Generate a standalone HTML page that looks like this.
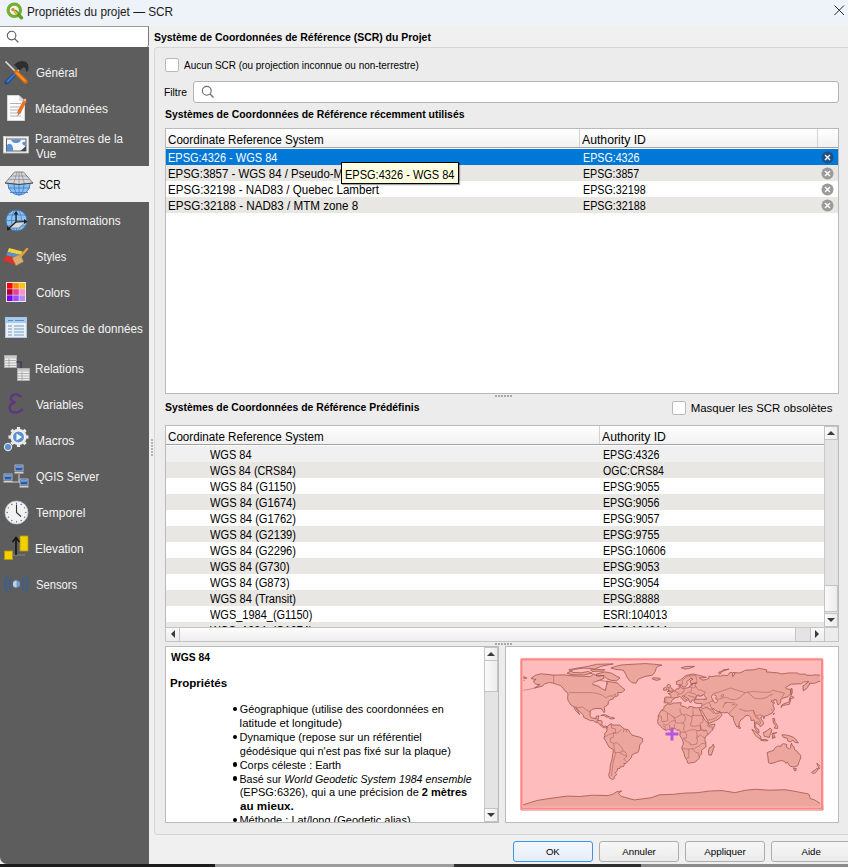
<!DOCTYPE html><html><head><meta charset="utf-8"><style>
*{margin:0;padding:0;box-sizing:border-box}
html,body{width:848px;height:867px;overflow:hidden;background:#f0f0f0;font-family:"Liberation Sans",sans-serif;position:relative}
.a{position:absolute}
.t{position:absolute;white-space:nowrap;line-height:1;color:#000}
.sbtn{position:absolute;background:linear-gradient(90deg,#fafafa,#ececec);border:1px solid #c4c4c4}
.btn{position:absolute;height:21px;border:1px solid #adadad;border-radius:3px;background:linear-gradient(#f7f7f7,#ebebeb)}
</style></head><body>
<div class="a" style="left:0;top:0;width:848px;height:26px;background:#eef2f9"></div>
<svg class="a" style="left:6px;top:2px" width="18" height="18" viewBox="0 0 18 18">
<circle cx="8.3" cy="8.3" r="6.2" fill="none" stroke="#73b02f" stroke-width="3.2"/>
<path d="M9.5 9.5 L15.5 15.8" stroke="#5e9d24" stroke-width="3.4" stroke-linecap="round"/>
<circle cx="7" cy="7.6" r="1.7" fill="#ef7b2a"/><path d="M8.3 9 L11.3 12.2" stroke="#f3c33c" stroke-width="1.8"/>
</svg>
<div class="t" style="left:27.36px;top:5.57px;font-size:12.2px;transform:scaleX(0.9672);transform-origin:0 0;color:#1b1b1b">Propriétés du projet — SCR</div>
<svg class="a" style="left:834px;top:5px" width="10.5" height="10.5" viewBox="0 0 12 12"><path d="M0.6 0.6L11.4 11.4M11.4 0.6L0.6 11.4" stroke="#1e1e1e" stroke-width="1.1"/></svg>
<div class="a" style="left:0;top:47px;width:149px;height:817px;background:#5d5d5d;border-bottom-left-radius:7px"></div>
<div class="a" style="left:0;top:26px;width:149px;height:21px;background:#fff;border-top:1px solid #999;border-right:1px solid #7a7a7a;border-bottom-right-radius:3px"></div>
<svg class="a" style="left:6px;top:30px" width="14" height="14" viewBox="0 0 14 14"><circle cx="5.6" cy="5.6" r="4.3" fill="none" stroke="#5a5a5a" stroke-width="1.1"/><path d="M8.6 8.6L12.4 12.4" stroke="#5a5a5a" stroke-width="1.3"/></svg>
<div class="a" style="left:0;top:166px;width:149px;height:36px;background:#f0f0f0"></div>
<div class="t" style="left:35.82px;top:67.19px;font-size:12.3px;transform:scaleX(0.9439);transform-origin:0 0;color:#f4f4f4">Général</div>
<div class="t" style="left:35.44px;top:103.19px;font-size:12.3px;transform:scaleX(0.9797);transform-origin:0 0;color:#f4f4f4">Métadonnées</div>
<div class="t" style="left:35.48px;top:132.89px;font-size:12.3px;transform:scaleX(0.9383);transform-origin:0 0;color:#f4f4f4">Paramètres de la</div>
<div class="t" style="left:36.40px;top:148.49px;font-size:12.3px;transform:scaleX(0.9436);transform-origin:0 0;color:#f4f4f4">Vue</div>
<div class="t" style="left:38.89px;top:178.99px;font-size:12.3px;transform:scaleX(0.8334);transform-origin:0 0;color:#000">SCR</div>
<div class="t" style="left:36.16px;top:214.89px;font-size:12.3px;transform:scaleX(0.9568);transform-origin:0 0;color:#f4f4f4">Transformations</div>
<div class="t" style="left:35.96px;top:250.99px;font-size:12.3px;transform:scaleX(0.9040);transform-origin:0 0;color:#f4f4f4">Styles</div>
<div class="t" style="left:35.81px;top:286.99px;font-size:12.3px;transform:scaleX(0.9549);transform-origin:0 0;color:#f4f4f4">Colors</div>
<div class="t" style="left:35.93px;top:322.99px;font-size:12.3px;transform:scaleX(0.9467);transform-origin:0 0;color:#f4f4f4">Sources de données</div>
<div class="t" style="left:35.46px;top:363.09px;font-size:12.3px;transform:scaleX(0.9534);transform-origin:0 0;color:#f4f4f4">Relations</div>
<div class="t" style="left:36.40px;top:399.09px;font-size:12.3px;transform:scaleX(0.9401);transform-origin:0 0;color:#f4f4f4">Variables</div>
<div class="t" style="left:35.44px;top:435.39px;font-size:12.3px;transform:scaleX(0.9751);transform-origin:0 0;color:#f4f4f4">Macros</div>
<div class="t" style="left:35.96px;top:471.09px;font-size:12.3px;transform:scaleX(0.8975);transform-origin:0 0;color:#f4f4f4">QGIS Server</div>
<div class="t" style="left:36.16px;top:507.09px;font-size:12.3px;transform:scaleX(0.9783);transform-origin:0 0;color:#f4f4f4">Temporel</div>
<div class="t" style="left:35.45px;top:543.09px;font-size:12.3px;transform:scaleX(0.9607);transform-origin:0 0;color:#f4f4f4">Elevation</div>
<div class="t" style="left:35.95px;top:579.19px;font-size:12.3px;transform:scaleX(0.9128);transform-origin:0 0;color:#f4f4f4">Sensors</div>
<svg class="a" style="left:4px;top:60px" width="25" height="25" viewBox="0 0 25 25">
<path d="M2.5 22.5 L12 13" stroke="#1f4f8f" stroke-width="4.2" stroke-linecap="round"/>
<path d="M3 22 L11 14" stroke="#3f78c0" stroke-width="2"/>
<path d="M12 13 L16 9" stroke="#bdbdbd" stroke-width="2"/>
<path d="M10 4.5 Q16 -1 22 2 Q25 4 24.5 8.5 Q24 11.5 22.5 12 L21.5 8.5 Q20 6.5 18.5 8 L16 11 L13 8 Z" fill="#2b2f33"/>
<path d="M1.5 1.5 L12 12" stroke="#e0e0e0" stroke-width="1.6"/>
<path d="M12 12 L21.5 21.5" stroke="#e36c0a" stroke-width="4.4" stroke-linecap="round"/>
<path d="M12.5 12.5 L21 21" stroke="#ff9a2e" stroke-width="1.6"/>
</svg>
<svg class="a" style="left:7px;top:95px" width="20" height="26" viewBox="0 0 20 26">
<path d="M0.5 0.5 H12 L17.5 6 V25.5 H0.5 Z" fill="#fdfdfd" stroke="#d8d8d8" stroke-width="1"/>
<path d="M12 0.5 V6 H17.5" fill="#dedede"/>
<g stroke="#b4b4b4" stroke-width="1"><path d="M3 8.5H14M3 12H14M3 15H13M3 18H12M3 21H14"/></g>
<path d="M11.5 18.5 L18 5.5" stroke="#e8742a" stroke-width="3.6"/>
<path d="M17 4.5 L19 5.5" stroke="#f1b9a0" stroke-width="2.5"/>
<path d="M10.2 21.5 L11.3 18 L12.6 18.7 Z" fill="#777"/>
</svg>
<svg class="a" style="left:3px;top:136px" width="26" height="18" viewBox="0 0 26 18">
<rect x="0.5" y="0.5" width="25" height="16.5" fill="#f2f2f2" stroke="#c8c8c8" stroke-width="0.8"/>
<rect x="0.5" y="0" width="3" height="17" rx="1.5" fill="#f6f6f6" stroke="#bcbcbc" stroke-width="0.7"/>
<rect x="3.5" y="3" width="19.5" height="12" fill="#f6f6f6" stroke="#555" stroke-width="0.9"/>
<path d="M8 3.5 H18 Q17.5 6.5 14 7 Q11 7.5 9 5.5 Z" fill="#5b90d4"/>
<path d="M4 15 V9 Q7 6 9.5 10 Q10.5 13 10 15 Z" fill="#5b90d4"/>
<path d="M19 7 Q21 5 22.8 6 V10 Q20.5 10.5 19 7Z" fill="#5b90d4"/>
<path d="M17.5 15 L23 10 V15 Z" fill="#444"/>
</svg>
<svg class="a" style="left:5px;top:171px" width="29" height="25" viewBox="0 0 29 25">
<circle cx="14" cy="13" r="11" fill="#8cc0f0" stroke="#3a78c8" stroke-width="0.9"/>
<g stroke="#3a78c8" stroke-width="0.8" fill="none"><path d="M3 17 H25M5 21.5 H23M14 13 V24"/><ellipse cx="14" cy="13" rx="5" ry="11"/></g>
<path d="M9.5 1 H18.5 L28 12 Q14 15 0 12 Z" fill="#d2d6dc" stroke="#6c6c6c" stroke-width="0.8"/>
<g stroke="#7d7d7d" stroke-width="0.6" fill="none"><path d="M12 1 L8.5 13M14 1 V13.8M16 1 L19.5 13M6 5 H22M3 8.5 H25"/></g>
<path d="M0 12 Q14 15 28 12" stroke="#444" stroke-width="0.9" fill="none"/>
</svg>
<svg class="a" style="left:5px;top:209px" width="23" height="23" viewBox="0 0 23 23">
<circle cx="11.5" cy="11.5" r="10.5" fill="#8ec2f0" stroke="#3a78c0" stroke-width="0.9"/>
<g stroke="#3a78c0" stroke-width="0.7" fill="none"><path d="M1 11.5 H22M2.5 6 H20.5M2.5 17 H20.5M11.5 1 V22"/><ellipse cx="11.5" cy="11.5" rx="5" ry="10.5"/></g>
<path d="M4 19 L11 13 L21 12.5 L14 19 Z" fill="#d8d8d8" stroke="#666" stroke-width="0.6"/>
<path d="M11 13 V3" stroke="#222" stroke-width="1.3"/><path d="M8.5 5.5 L11 2 L13.5 5.5Z" fill="#222"/>
<path d="M11 13 L20.5 12.5" stroke="#222" stroke-width="1.2"/><path d="M19 10 L22.5 12.5 L19 15Z" fill="#222"/>
<path d="M11 13 L3.5 19.5" stroke="#222" stroke-width="1.2"/><path d="M2 17 L2 21.5 L6 20.5Z" fill="#222"/>
</svg>
<svg class="a" style="left:3px;top:247px" width="26" height="20" viewBox="0 0 26 20">
<path d="M6 1 L19.5 4.5 L18 8 L4.5 5 Z" fill="#f2d040"/>
<path d="M4.5 5 L18 8 L16.5 11.5 L3 8.5 Z" fill="#5a90cc"/>
<path d="M3 8.5 L16.5 11.5 L14.5 18.5 L0 13.5 Z" fill="#e0302a"/>
<path d="M9.5 11 L17 7.5 L20.5 14.5 L13 18.5 Z" fill="#ddb47c" stroke="#b8864a" stroke-width="0.7"/>
<g stroke="#c79a60" stroke-width="0.5"><path d="M11.5 10L15 17.5M14 9L17.5 16.5M10.5 13L18.5 9.5M11.5 15.5L19.5 12"/></g>
<path d="M17.5 9.5 L24 2" stroke="#e0a040" stroke-width="2.4" stroke-linecap="round"/>
</svg>
<svg class="a" style="left:6px;top:282px" width="20" height="20" viewBox="0 0 20 20"><rect x="0" y="0" width="20" height="20" fill="#e8e8e8"/><rect x="1.0" y="1.0" width="5.6" height="5.6" fill="#ff0000"/><rect x="7.2" y="1.0" width="5.6" height="5.6" fill="#ff8c00"/><rect x="13.4" y="1.0" width="5.6" height="5.6" fill="#ffc400"/><rect x="1.0" y="7.2" width="5.6" height="5.6" fill="#b0003a"/><rect x="7.2" y="7.2" width="5.6" height="5.6" fill="#e7409a"/><rect x="13.4" y="7.2" width="5.6" height="5.6" fill="#ff8fc9"/><rect x="1.0" y="13.4" width="5.6" height="5.6" fill="#7a00ff"/><rect x="7.2" y="13.4" width="5.6" height="5.6" fill="#9d4dff"/><rect x="13.4" y="13.4" width="5.6" height="5.6" fill="#b38cff"/></svg>
<svg class="a" style="left:5px;top:317px" width="22" height="21" viewBox="0 0 22 21">
<rect x="0.5" y="0.5" width="21" height="20" fill="#edf0f3" stroke="#aac8e4" stroke-width="1"/>
<rect x="1" y="1" width="20" height="5" fill="#a8ccec"/>
<g stroke="#5b8ec6" stroke-width="1.2"><path d="M3 3.5H8M10 3.5H19"/></g>
<g stroke="#6a9ad0" stroke-width="1"><path d="M3 9H7M9 9H19M3 12H7M9 12H19M3 15H7M9 15H19M3 18H7M9 18H19"/></g>
</svg>
<svg class="a" style="left:4px;top:355px" width="26" height="26" viewBox="0 0 26 26">
<rect x="0.5" y="0.5" width="12" height="12" fill="#ededed" stroke="#b0b0b0" stroke-width="0.8"/>
<rect x="1" y="1" width="11" height="2.5" fill="#c8c8c8"/>
<g stroke="#9a9a9a" stroke-width="0.7"><path d="M1 5.5H12M1 8H12M1 10.5H12M5 3.5V12"/></g>
<path d="M12.5 7 H17 V14" stroke="#2a3a55" stroke-width="1.2" fill="none"/>
<rect x="13.5" y="13.5" width="12" height="12" fill="#ededed" stroke="#b0b0b0" stroke-width="0.8"/>
<rect x="14" y="14" width="11" height="2.5" fill="#c8c8c8"/>
<g stroke="#9a9a9a" stroke-width="0.7"><path d="M14 18.5H25M14 21H25M14 23.5H25M18 16.5V25"/></g>
</svg>
<svg class="a" style="left:8px;top:393px" width="16" height="21" viewBox="0 0 16 21">
<path d="M12.5 3.5 Q10 1 6.5 1.5 Q2.5 2.5 3 6 Q3.5 9 7.5 9.5 Q2 10.5 1.5 14.5 Q1.5 19.5 7.5 19.5 Q11.5 19.5 14 16.5" stroke="#5f3680" stroke-width="2.4" fill="none" stroke-linecap="round"/>
</svg>
<svg class="a" style="left:3px;top:427px" width="26" height="26" viewBox="0 0 26 26">
<g transform="translate(15.5,10)">
<circle r="8.2" fill="#e8e8e8"/>
<g fill="#e8e8e8"><rect x="-1.6" y="-10" width="3.2" height="4" transform="rotate(0)"/><rect x="-1.6" y="-10" width="3.2" height="4" transform="rotate(45)"/><rect x="-1.6" y="-10" width="3.2" height="4" transform="rotate(90)"/><rect x="-1.6" y="-10" width="3.2" height="4" transform="rotate(135)"/><rect x="-1.6" y="-10" width="3.2" height="4" transform="rotate(180)"/><rect x="-1.6" y="-10" width="3.2" height="4" transform="rotate(225)"/><rect x="-1.6" y="-10" width="3.2" height="4" transform="rotate(270)"/><rect x="-1.6" y="-10" width="3.2" height="4" transform="rotate(315)"/></g>
<circle r="6" fill="#5b8fd0" stroke="#fff" stroke-width="1"/>
<path d="M-2 -3.5 L3.5 0 L-2 3.5Z" fill="#fff"/>
</g>
<g transform="translate(5,20)"><circle r="4.2" fill="#dedede"/><circle r="3" fill="#5b8fd0"/></g>
</svg>
<svg class="a" style="left:3px;top:464px" width="27" height="25" viewBox="0 0 27 25"><path d="M9 18 H17 M16 10 V18" stroke="#d0d0d0" stroke-width="1" fill="none"/><rect x="12" y="1" width="8" height="6" fill="#2c5aa0" stroke="#ccc" stroke-width="0.8"/><rect x="12.8" y="1.8" width="6.4" height="2" fill="#6fa0e0"/><rect x="11.5" y="8" width="9" height="1.5" fill="#d0d0d0"/><rect x="1" y="10" width="8" height="6" fill="#2c5aa0" stroke="#ccc" stroke-width="0.8"/><rect x="1.8" y="10.8" width="6.4" height="2" fill="#6fa0e0"/><rect x="0.5" y="17" width="9" height="1.5" fill="#d0d0d0"/><rect x="17" y="15" width="8" height="6" fill="#2c5aa0" stroke="#ccc" stroke-width="0.8"/><rect x="17.8" y="15.8" width="6.4" height="2" fill="#6fa0e0"/><rect x="16.5" y="22" width="9" height="1.5" fill="#d0d0d0"/></svg>
<svg class="a" style="left:4px;top:500px" width="25" height="25" viewBox="0 0 25 25">
<circle cx="12.5" cy="12.5" r="11.5" fill="#f2f2f2" stroke="#c0c0c0" stroke-width="0.8"/>
<circle cx="21.80" cy="12.50" r="0.7" fill="#3b6fb8"/><circle cx="20.55" cy="17.15" r="0.7" fill="#3b6fb8"/><circle cx="17.15" cy="20.55" r="0.7" fill="#3b6fb8"/><circle cx="12.50" cy="21.80" r="0.7" fill="#3b6fb8"/><circle cx="7.85" cy="20.55" r="0.7" fill="#3b6fb8"/><circle cx="4.45" cy="17.15" r="0.7" fill="#3b6fb8"/><circle cx="3.20" cy="12.50" r="0.7" fill="#3b6fb8"/><circle cx="4.45" cy="7.85" r="0.7" fill="#3b6fb8"/><circle cx="7.85" cy="4.45" r="0.7" fill="#3b6fb8"/><circle cx="12.50" cy="3.20" r="0.7" fill="#3b6fb8"/><circle cx="17.15" cy="4.45" r="0.7" fill="#3b6fb8"/><circle cx="20.55" cy="7.85" r="0.7" fill="#3b6fb8"/>
<path d="M12.5 4.5 V12.5 L17 16.5" stroke="#333" stroke-width="1.1" fill="none"/>
</svg>
<svg class="a" style="left:4px;top:535px" width="25" height="26" viewBox="0 0 25 26">
<rect x="16" y="1" width="8" height="15" fill="#f0d000" stroke="#b49a00" stroke-width="0.8"/>
<rect x="0.5" y="16" width="8" height="8.5" fill="#f0d000" stroke="#b49a00" stroke-width="0.8"/>
<path d="M8 20 H21" stroke="#888" stroke-width="1"/>
<path d="M12 20 V4" stroke="#151515" stroke-width="1.6"/><path d="M8.5 7 L12 2.5 L15.5 7" stroke="#151515" stroke-width="1.6" fill="none"/>
</svg>
<svg class="a" style="left:3px;top:574px" width="27" height="20" viewBox="0 0 27 20">
<circle cx="13.5" cy="10" r="3.6" fill="#6f9cd2"/><path d="M13.5 6.4 A3.6 3.6 0 0 0 13.5 13.6Z" fill="#b8d0ee"/>
<g stroke="#3c5f8c" stroke-width="1.9" fill="none"><path d="M8 4 Q4.5 10 8 16M19 4 Q22.5 10 19 16M4.5 1.5 Q-0.5 10 4.5 18.5M22.5 1.5 Q27.5 10 22.5 18.5"/></g>
</svg>
<div class="a" style="left:149px;top:26px;width:699px;height:838px;background:#f0f0f0"></div>
<div class="t" style="left:154.29px;top:32.58px;font-size:10.3px;transform:scaleX(1.0144);transform-origin:0 0;font-weight:bold">Système de Coordonnées de Référence (SCR) du Projet</div>
<div class="a" style="left:154px;top:47px;width:710px;height:788px;border:1px solid #d6d6d6;border-radius:3px;background:#ececec"></div>
<div class="a" style="left:165px;top:58px;width:14px;height:14px;background:#fff;border:1px solid #b8b8b8;border-radius:2px"></div>
<div class="t" style="left:184.20px;top:60.88px;font-size:10.3px;transform:scaleX(0.9655);transform-origin:0 0">Aucun SCR (ou projection inconnue ou non-terrestre)</div>
<div class="t" style="left:164.38px;top:87.73px;font-size:10.0px;transform:scaleX(1.0304);transform-origin:0 0">Filtre</div>
<div class="a" style="left:193px;top:81px;width:646px;height:22px;background:#fff;border:1px solid #b4b4b4;border-radius:3px"></div>
<svg class="a" style="left:201px;top:85px" width="14" height="14" viewBox="0 0 14 14"><circle cx="5.8" cy="5.8" r="4.4" fill="none" stroke="#6a6a6a" stroke-width="1.1"/><path d="M8.8 8.8L12.5 12.5" stroke="#6a6a6a" stroke-width="1.3"/></svg>
<div class="t" style="left:164.79px;top:110.38px;font-size:10.3px;transform:scaleX(1.0123);transform-origin:0 0;font-weight:bold">Systèmes de Coordonnées de Référence récemment utilisés</div>
<div class="a" style="left:151px;top:439px;width:1.5px;height:1.5px;background:#b4b4b4"></div>
<div class="a" style="left:151px;top:442px;width:1.5px;height:1.5px;background:#b4b4b4"></div>
<div class="a" style="left:151px;top:445px;width:1.5px;height:1.5px;background:#b4b4b4"></div>
<div class="a" style="left:151px;top:448px;width:1.5px;height:1.5px;background:#b4b4b4"></div>
<div class="a" style="left:151px;top:451px;width:1.5px;height:1.5px;background:#b4b4b4"></div>
<div class="a" style="left:151px;top:454px;width:1.5px;height:1.5px;background:#b4b4b4"></div>
<div class="a" style="left:165px;top:128px;width:674px;height:266px;background:#fff;border:1px solid #b9b9b9"></div>
<div class="a" style="left:166px;top:129px;width:672px;height:18px;background:linear-gradient(#ffffff,#f1f1f1)"></div>
<div class="a" style="left:166px;top:147px;width:672px;height:1px;background:#a3a3a3"></div>
<div class="a" style="left:579px;top:129px;width:1px;height:18px;background:#d3d3d3"></div>
<div class="a" style="left:817px;top:129px;width:1px;height:18px;background:#d3d3d3"></div>
<div class="t" style="left:168.12px;top:134.04px;font-size:12.0px;transform:scaleX(0.9687);transform-origin:0 0">Coordinate Reference System</div>
<div class="t" style="left:582.40px;top:134.04px;font-size:12.0px;transform:scaleX(1.0196);transform-origin:0 0">Authority ID</div>
<div class="a" style="left:166px;top:149px;width:672px;height:16px;background:#0078d7"></div>
<div class="t" style="left:168.42px;top:151.84px;font-size:12.0px;transform:scaleX(0.9161);transform-origin:0 0;color:#fff">EPSG:4326 - WGS 84</div>
<div class="t" style="left:582.75px;top:151.84px;font-size:12.0px;transform:scaleX(0.8906);transform-origin:0 0;color:#fff">EPSG:4326</div>
<svg class="a" style="left:821px;top:150.5px" width="13" height="13" viewBox="0 0 13 13"><circle cx="6.5" cy="6.5" r="6" fill="#1f4f84"/><path d="M4 4L9 9M9 4L4 9" stroke="#fff" stroke-width="1.4"/></svg>
<div class="a" style="left:166px;top:165px;width:672px;height:16px;background:#e9e7e3"></div>
<div class="t" style="left:168.39px;top:167.84px;font-size:12.0px;transform:scaleX(0.9509);transform-origin:0 0;color:#000">EPSG:3857 - WGS 84 / Pseudo-Mercator</div>
<div class="t" style="left:582.75px;top:167.84px;font-size:12.0px;transform:scaleX(0.8859);transform-origin:0 0;color:#000">EPSG:3857</div>
<svg class="a" style="left:821px;top:166.5px" width="13" height="13" viewBox="0 0 13 13"><circle cx="6.5" cy="6.5" r="6" fill="#9a9a9a"/><path d="M4 4L9 9M9 4L4 9" stroke="#fff" stroke-width="1.4"/></svg>
<div class="a" style="left:166px;top:181px;width:672px;height:16px;background:#ffffff"></div>
<div class="t" style="left:168.37px;top:183.84px;font-size:12.0px;transform:scaleX(0.9640);transform-origin:0 0;color:#000">EPSG:32198 - NAD83 / Quebec Lambert</div>
<div class="t" style="left:582.74px;top:183.84px;font-size:12.0px;transform:scaleX(0.8958);transform-origin:0 0;color:#000">EPSG:32198</div>
<svg class="a" style="left:821px;top:182.5px" width="13" height="13" viewBox="0 0 13 13"><circle cx="6.5" cy="6.5" r="6" fill="#9a9a9a"/><path d="M4 4L9 9M9 4L4 9" stroke="#fff" stroke-width="1.4"/></svg>
<div class="a" style="left:166px;top:197px;width:672px;height:16px;background:#e9e7e3"></div>
<div class="t" style="left:168.37px;top:199.84px;font-size:12.0px;transform:scaleX(0.9697);transform-origin:0 0;color:#000">EPSG:32188 - NAD83 / MTM zone 8</div>
<div class="t" style="left:582.74px;top:199.84px;font-size:12.0px;transform:scaleX(0.8958);transform-origin:0 0;color:#000">EPSG:32188</div>
<svg class="a" style="left:821px;top:198.5px" width="13" height="13" viewBox="0 0 13 13"><circle cx="6.5" cy="6.5" r="6" fill="#9a9a9a"/><path d="M4 4L9 9M9 4L4 9" stroke="#fff" stroke-width="1.4"/></svg>
<div class="a" style="left:341px;top:162px;width:118px;height:22px;background:#ffffe1;border:1px solid #000;box-shadow:1px 1px 1px rgba(0,0,0,.35)"></div>
<div class="t" style="left:344.52px;top:168.64px;font-size:12.0px;transform:scaleX(0.9169);transform-origin:0 0">EPSG:4326 - WGS 84</div>
<div class="a" style="left:495px;top:395px;width:1.5px;height:1.5px;background:#a8a8a8"></div>
<div class="a" style="left:498px;top:395px;width:1.5px;height:1.5px;background:#a8a8a8"></div>
<div class="a" style="left:501px;top:395px;width:1.5px;height:1.5px;background:#a8a8a8"></div>
<div class="a" style="left:504px;top:395px;width:1.5px;height:1.5px;background:#a8a8a8"></div>
<div class="a" style="left:507px;top:395px;width:1.5px;height:1.5px;background:#a8a8a8"></div>
<div class="a" style="left:510px;top:395px;width:1.5px;height:1.5px;background:#a8a8a8"></div>
<div class="t" style="left:164.79px;top:403.28px;font-size:10.3px;transform:scaleX(1.0081);transform-origin:0 0;font-weight:bold">Systèmes de Coordonnées de Référence Prédéfinis</div>
<div class="a" style="left:672px;top:401px;width:14px;height:14px;background:#fff;border:1px solid #b8b8b8;border-radius:2px"></div>
<div class="t" style="left:690.68px;top:402.92px;font-size:11.44px">Masquer les SCR obsolètes</div>
<div class="a" style="left:165px;top:425px;width:674px;height:217px;background:#fff;border:1px solid #b9b9b9"></div>
<div class="a" style="left:166px;top:426px;width:658px;height:18px;background:linear-gradient(#ffffff,#f1f1f1)"></div>
<div class="a" style="left:166px;top:444px;width:658px;height:1px;background:#a3a3a3"></div>
<div class="a" style="left:599px;top:426px;width:1px;height:18px;background:#d3d3d3"></div>
<div class="t" style="left:168.12px;top:431.04px;font-size:12.0px;transform:scaleX(0.9687);transform-origin:0 0">Coordinate Reference System</div>
<div class="t" style="left:601.80px;top:431.04px;font-size:12.0px;transform:scaleX(1.0196);transform-origin:0 0">Authority ID</div>
<div class="a" style="left:166px;top:446px;width:658px;height:181px;overflow:hidden">
<div class="a" style="left:0;top:0px;width:658px;height:16px;background:#f0f0f0"></div>
<div class="t" style="left:43.60px;top:2.74px;font-size:12.0px;transform:scaleX(0.9149);transform-origin:0 0">WGS 84</div>
<div class="t" style="left:436.65px;top:2.74px;font-size:12.0px;transform:scaleX(0.8890);transform-origin:0 0">EPSG:4326</div>
<div class="a" style="left:0;top:16px;width:658px;height:16px;background:#e9e7e3"></div>
<div class="t" style="left:43.60px;top:18.74px;font-size:12.0px;transform:scaleX(0.9016);transform-origin:0 0">WGS 84 (CRS84)</div>
<div class="t" style="left:437.08px;top:18.74px;font-size:12.0px;transform:scaleX(0.8781);transform-origin:0 0">OGC:CRS84</div>
<div class="a" style="left:0;top:32px;width:658px;height:16px;background:#ffffff"></div>
<div class="t" style="left:43.60px;top:34.74px;font-size:12.0px;transform:scaleX(0.9367);transform-origin:0 0">WGS 84 (G1150)</div>
<div class="t" style="left:436.65px;top:34.74px;font-size:12.0px;transform:scaleX(0.8890);transform-origin:0 0">EPSG:9055</div>
<div class="a" style="left:0;top:48px;width:658px;height:16px;background:#e9e7e3"></div>
<div class="t" style="left:43.60px;top:50.74px;font-size:12.0px;transform:scaleX(0.9276);transform-origin:0 0">WGS 84 (G1674)</div>
<div class="t" style="left:436.65px;top:50.74px;font-size:12.0px;transform:scaleX(0.8890);transform-origin:0 0">EPSG:9056</div>
<div class="a" style="left:0;top:64px;width:658px;height:16px;background:#ffffff"></div>
<div class="t" style="left:43.60px;top:66.74px;font-size:12.0px;transform:scaleX(0.9276);transform-origin:0 0">WGS 84 (G1762)</div>
<div class="t" style="left:436.64px;top:66.74px;font-size:12.0px;transform:scaleX(0.8907);transform-origin:0 0">EPSG:9057</div>
<div class="a" style="left:0;top:80px;width:658px;height:16px;background:#e9e7e3"></div>
<div class="t" style="left:43.60px;top:82.74px;font-size:12.0px;transform:scaleX(0.9276);transform-origin:0 0">WGS 84 (G2139)</div>
<div class="t" style="left:436.65px;top:82.74px;font-size:12.0px;transform:scaleX(0.8890);transform-origin:0 0">EPSG:9755</div>
<div class="a" style="left:0;top:96px;width:658px;height:16px;background:#ffffff"></div>
<div class="t" style="left:43.60px;top:98.74px;font-size:12.0px;transform:scaleX(0.9276);transform-origin:0 0">WGS 84 (G2296)</div>
<div class="t" style="left:436.64px;top:98.74px;font-size:12.0px;transform:scaleX(0.8958);transform-origin:0 0">EPSG:10606</div>
<div class="a" style="left:0;top:112px;width:658px;height:16px;background:#e9e7e3"></div>
<div class="t" style="left:43.60px;top:114.74px;font-size:12.0px;transform:scaleX(0.9252);transform-origin:0 0">WGS 84 (G730)</div>
<div class="t" style="left:436.65px;top:114.74px;font-size:12.0px;transform:scaleX(0.8890);transform-origin:0 0">EPSG:9053</div>
<div class="a" style="left:0;top:128px;width:658px;height:16px;background:#ffffff"></div>
<div class="t" style="left:43.60px;top:130.74px;font-size:12.0px;transform:scaleX(0.9252);transform-origin:0 0">WGS 84 (G873)</div>
<div class="t" style="left:436.65px;top:130.74px;font-size:12.0px;transform:scaleX(0.8873);transform-origin:0 0">EPSG:9054</div>
<div class="a" style="left:0;top:144px;width:658px;height:16px;background:#e9e7e3"></div>
<div class="t" style="left:43.60px;top:146.74px;font-size:12.0px;transform:scaleX(0.9256);transform-origin:0 0">WGS 84 (Transit)</div>
<div class="t" style="left:436.65px;top:146.74px;font-size:12.0px;transform:scaleX(0.8890);transform-origin:0 0">EPSG:8888</div>
<div class="a" style="left:0;top:160px;width:658px;height:16px;background:#ffffff"></div>
<div class="t" style="left:43.60px;top:162.74px;font-size:12.0px;transform:scaleX(0.9155);transform-origin:0 0">WGS_1984_(G1150)</div>
<div class="t" style="left:436.64px;top:162.74px;font-size:12.0px;transform:scaleX(0.9001);transform-origin:0 0">ESRI:104013</div>
<div class="a" style="left:0;top:176px;width:658px;height:16px;background:#e9e7e3"></div>
<div class="t" style="left:43.60px;top:178.74px;font-size:12.0px;transform:scaleX(0.9082);transform-origin:0 0">WGS_1984_(G1674)</div>
<div class="t" style="left:436.64px;top:178.74px;font-size:12.0px;transform:scaleX(0.8986);transform-origin:0 0">ESRI:104014</div>
</div>
<div class="a" style="left:824px;top:426px;width:14px;height:201px;background:#e4e4e4;border-left:1px solid #c9c9c9"></div>
<div class="sbtn" style="left:824px;top:426px;width:14px;height:14px"></div>
<div class="sbtn" style="left:824px;top:585px;width:14px;height:27px"></div>
<div class="sbtn" style="left:824px;top:613px;width:14px;height:14px"></div>
<svg class="a" style="left:827px;top:431px" width="8" height="4" viewBox="0 0 8 4"><path d="M0 4L4 0L8 4Z" fill="#3a3a3a"/></svg>
<svg class="a" style="left:827px;top:618px" width="8" height="4" viewBox="0 0 8 4"><path d="M0 0L4 4L8 0Z" fill="#3a3a3a"/></svg>
<div class="a" style="left:166px;top:627px;width:658px;height:14px;background:#e4e4e4;border-top:1px solid #c9c9c9"></div>
<div class="sbtn" style="left:165px;top:627px;width:15px;height:15px;background:linear-gradient(#fafafa,#ececec)"></div>
<div class="sbtn" style="left:179px;top:627px;width:617px;height:15px;background:linear-gradient(#fdfdfd,#ededed)"></div>
<div class="sbtn" style="left:810px;top:627px;width:15px;height:15px;background:linear-gradient(#fafafa,#ececec)"></div>
<div class="a" style="left:824px;top:627px;width:15px;height:15px;background:#ececec;border:1px solid #c4c4c4"></div>
<svg class="a" style="left:171px;top:630px" width="4" height="8" viewBox="0 0 4 8"><path d="M4 0L0 4L4 8Z" fill="#3a3a3a"/></svg>
<svg class="a" style="left:815px;top:630px" width="4" height="8" viewBox="0 0 4 8"><path d="M0 0L4 4L0 8Z" fill="#3a3a3a"/></svg>
<div class="a" style="left:495px;top:643px;width:1.5px;height:1.5px;background:#a8a8a8"></div>
<div class="a" style="left:498px;top:643px;width:1.5px;height:1.5px;background:#a8a8a8"></div>
<div class="a" style="left:501px;top:643px;width:1.5px;height:1.5px;background:#a8a8a8"></div>
<div class="a" style="left:504px;top:643px;width:1.5px;height:1.5px;background:#a8a8a8"></div>
<div class="a" style="left:507px;top:643px;width:1.5px;height:1.5px;background:#a8a8a8"></div>
<div class="a" style="left:510px;top:643px;width:1.5px;height:1.5px;background:#a8a8a8"></div>
<div class="a" style="left:165px;top:646px;width:334px;height:177px;background:#fff;border:1px solid #b9b9b9;overflow:hidden">
<div class="t" style="left:4.60px;top:5.54px;font-size:10.0px;transform:scaleX(1.0284);transform-origin:0 0;font-weight:bold">WGS 84</div>
<div class="t" style="left:3.91px;top:30.69px;font-size:11.0px;transform:scaleX(1.0515);transform-origin:0 0;font-weight:bold">Propriétés</div>
<div class="a" style="left:66.70px;top:59.90px;width:4.4px;height:4.4px;border-radius:50%;background:#000"></div>
<div class="t" style="left:73.76px;top:57.23px;font-size:10.83px">Géographique (utilise des coordonnées en</div>
<div class="t" style="left:73.62px;top:70.62px;font-size:11.38px">latitude et longitude)</div>
<div class="a" style="left:66.70px;top:87.60px;width:4.4px;height:4.4px;border-radius:50%;background:#000"></div>
<div class="t" style="left:73.42px;top:84.74px;font-size:11.06px">Dynamique (repose sur un référentiel</div>
<div class="t" style="left:73.86px;top:98.65px;font-size:10.99px">géodésique qui n'est pas fixé sur la plaque)</div>
<div class="a" style="left:66.70px;top:115.30px;width:4.4px;height:4.4px;border-radius:50%;background:#000"></div>
<div class="t" style="left:73.76px;top:112.60px;font-size:10.87px">Corps céleste : Earth</div>
<div class="a" style="left:66.70px;top:129.15px;width:4.4px;height:4.4px;border-radius:50%;background:#000"></div>
<div class="t" style="left:73.45px;top:126.64px;font-size:10.64px">Basé sur <i>World Geodetic System 1984 ensemble</i></div>
<div class="t" style="left:73.64px;top:140.19px;font-size:11.0px">(EPSG:6326), qui a une précision de <b>2 mètres</b></div>
<div class="t" style="left:74.07px;top:154.04px;font-size:11.0px;transform:scaleX(1.0588);transform-origin:0 0;font-weight:bold">au mieux.</div>
<div class="a" style="left:66.70px;top:170.70px;width:4.4px;height:4.4px;border-radius:50%;background:#000"></div>
<div class="t" style="left:73.42px;top:167.89px;font-size:11.0px">Méthode : Lat/long (Geodetic alias)</div>
</div>
<div class="a" style="left:484px;top:647px;width:14px;height:175px;background:#e4e4e4;border-left:1px solid #c9c9c9"></div>
<div class="sbtn" style="left:484px;top:647px;width:14px;height:14px"></div>
<div class="sbtn" style="left:484px;top:660px;width:14px;height:32px"></div>
<div class="sbtn" style="left:484px;top:808px;width:14px;height:14px"></div>
<svg class="a" style="left:487px;top:652px" width="8" height="4" viewBox="0 0 8 4"><path d="M0 4L4 0L8 4Z" fill="#3a3a3a"/></svg>
<svg class="a" style="left:487px;top:813px" width="8" height="4" viewBox="0 0 8 4"><path d="M0 0L4 4L8 0Z" fill="#3a3a3a"/></svg>
<div class="a" style="left:505px;top:646px;width:334px;height:177px;background:#fff;border:1px solid #b9b9b9"></div>
<svg class="a" style="left:520px;top:657px" width="304" height="154" viewBox="-1 -1 304 154">
<rect x="0.5" y="1.5" width="300.5" height="149" fill="#ffbcbc"/>
<path d="M10.1 20.3 L14.3 17.3 L20.1 15.8 L32.7 17.1 L43.6 16.9 L52.8 17.9 L60.4 18.2 L69.6 18.7 L72.1 16.0 L77.2 18.2 L82.2 17.3 L83.1 20.3 L78.9 22.0 L73.0 24.5 L72.1 26.6 L76.3 27.9 L82.2 31.2 L84.7 32.5 L84.7 29.6 L86.4 25.5 L85.6 23.2 L91.4 24.1 L96.5 25.1 L99.8 28.3 L104.0 31.7 L100.7 34.6 L96.5 34.5 L97.3 37.3 L95.6 38.4 L92.3 39.3 L92.3 40.9 L88.9 41.8 L87.2 43.9 L87.2 46.4 L83.1 49.4 L83.9 53.2 L83.1 54.7 L81.6 52.4 L80.5 50.7 L76.3 50.4 L72.1 51.0 L69.3 52.8 L69.0 57.4 L70.5 60.0 L74.7 60.4 L75.2 58.3 L78.0 57.8 L77.2 60.8 L76.8 62.5 L80.5 62.7 L81.2 63.8 L80.9 66.7 L82.6 68.4 L84.7 68.0 L86.2 68.8 L85.6 70.1 L83.5 69.7 L81.4 69.0 L78.9 66.7 L77.2 64.8 L73.8 63.8 L72.1 62.5 L69.6 62.7 L62.9 59.5 L62.1 56.6 L59.6 54.5 L56.6 51.5 L54.7 49.4 L56.5 52.4 L58.7 56.6 L57.0 54.9 L54.5 52.4 L52.7 48.6 L49.9 46.9 L47.1 42.6 L46.6 39.7 L47.0 36.3 L46.4 34.6 L44.0 32.9 L41.9 30.0 L39.4 27.4 L36.1 26.6 L32.7 25.3 L28.5 24.5 L23.5 25.8 L21.8 27.9 L17.6 29.1 L13.4 30.1 L18.9 26.6 L15.1 26.2 L12.6 24.1 L12.6 22.8 L15.1 21.5 L10.1 20.6Z M89.8 10.0 L94.8 8.3 L100.7 6.9 L113.2 6.2 L124.2 5.6 L132.5 6.2 L140.9 7.1 L136.7 8.3 L135.1 10.6 L134.2 13.5 L132.5 16.0 L130.9 17.3 L124.2 18.4 L117.4 21.1 L114.9 25.3 L110.7 24.5 L108.2 22.0 L106.1 19.4 L104.9 16.5 L102.3 12.2 L94.8 11.4Z M75.5 16.0 L83.9 13.9 L90.6 15.2 L95.6 18.2 L99.0 19.8 L95.6 22.8 L90.6 22.4 L86.4 21.1 L83.1 17.7 L75.5 17.7Z M46.1 15.2 L52.8 11.4 L62.9 10.1 L73.8 11.0 L79.7 8.4 L92.3 5.9 L75.5 6.3 L67.1 8.4 L53.7 10.6 L47.8 11.8 L52.0 14.4 L60.4 14.8 L67.1 13.5 L71.3 15.2 L62.9 16.9 L52.0 16.9Z M69.6 11.8 L75.5 11.4 L83.9 11.8 L82.2 13.1 L71.3 13.5Z M86.2 68.8 L88.1 66.7 L90.6 65.7 L91.0 67.1 L94.0 67.0 L99.0 67.1 L100.7 68.8 L103.2 70.9 L107.4 71.8 L109.1 74.7 L110.7 76.8 L114.1 78.1 L118.3 79.0 L121.6 80.6 L121.6 83.6 L118.7 87.0 L118.3 91.2 L116.6 94.6 L113.7 95.4 L110.7 97.5 L110.3 99.6 L107.4 103.0 L104.9 105.4 L102.8 105.6 L103.4 106.8 L102.5 108.5 L99.0 108.9 L98.7 110.6 L96.5 110.6 L96.5 112.3 L94.4 114.8 L95.6 116.5 L93.1 119.1 L93.5 120.3 L91.4 121.6 L88.5 119.9 L87.7 116.5 L88.9 113.2 L89.3 107.2 L91.0 101.3 L91.9 95.4 L92.3 91.6 L88.1 89.1 L86.4 86.1 L84.3 82.3 L82.9 80.2 L83.9 77.7 L83.6 75.6 L85.1 74.3 L86.0 72.6 L86.0 70.1Z M143.0 44.8 L143.4 43.1 L143.6 40.1 L144.3 39.1 L149.7 39.3 L150.0 37.2 L147.2 35.6 L149.7 34.9 L152.3 33.6 L154.4 32.5 L155.2 31.0 L158.1 30.6 L158.2 29.0 L157.9 27.9 L159.8 27.4 L159.8 29.6 L161.1 30.1 L162.7 30.4 L166.5 29.8 L168.6 29.1 L168.6 27.9 L170.7 27.7 L171.6 26.5 L169.5 26.3 L170.5 25.5 L175.7 25.3 L170.3 25.3 L169.0 24.5 L169.0 22.8 L172.2 21.1 L169.9 20.4 L165.7 23.6 L165.7 24.5 L166.9 25.8 L164.8 27.9 L164.4 28.7 L161.9 29.1 L160.2 26.2 L159.8 26.2 L157.7 26.9 L155.6 26.3 L155.2 23.6 L159.4 22.0 L161.9 20.1 L163.6 18.2 L167.4 16.9 L172.0 16.0 L176.2 16.9 L178.7 17.5 L185.4 19.4 L182.0 19.8 L178.3 19.8 L180.4 21.5 L182.0 22.1 L185.4 21.5 L187.9 20.3 L187.9 18.2 L190.4 18.6 L195.9 17.9 L199.7 18.2 L202.2 17.1 L206.4 17.7 L208.9 14.5 L211.4 14.7 L211.8 18.6 L213.9 15.6 L212.2 14.5 L218.5 15.0 L223.1 13.1 L224.0 12.2 L232.4 11.8 L238.2 10.4 L245.8 11.8 L245.4 13.9 L251.2 14.4 L257.1 14.9 L260.5 16.0 L268.0 14.9 L276.4 15.0 L278.5 16.2 L284.4 16.1 L285.2 17.2 L291.5 17.3 L294.0 16.9 L298.6 17.1 L302.0 17.7 L302.0 21.1 L300.7 21.5 L299.5 23.2 L296.7 23.9 L293.6 25.3 L288.6 25.3 L288.2 27.4 L286.9 28.3 L286.7 29.6 L284.0 31.7 L282.3 32.9 L281.9 27.9 L283.5 27.0 L287.7 23.6 L285.2 23.8 L282.5 24.1 L280.2 25.8 L276.0 25.9 L270.1 26.2 L264.4 29.7 L265.7 31.0 L269.3 31.2 L269.7 35.5 L266.8 38.8 L262.6 39.9 L259.8 41.4 L259.6 44.9 L257.1 47.0 L255.9 44.3 L255.9 42.2 L253.0 41.5 L253.0 43.1 L250.0 42.9 L251.2 44.6 L253.8 44.8 L251.7 46.9 L252.9 49.0 L253.3 51.5 L251.2 54.9 L246.6 57.3 L243.7 58.2 L242.9 60.8 L242.0 57.7 L240.3 59.1 L239.8 60.4 L242.7 64.8 L242.4 66.3 L239.1 68.7 L238.9 67.3 L236.8 65.9 L235.6 64.7 L234.2 67.3 L235.2 70.1 L237.6 71.4 L238.1 74.9 L236.0 73.6 L233.5 69.2 L233.6 65.0 L233.0 62.1 L230.0 62.5 L229.9 59.5 L228.4 58.3 L226.9 57.3 L224.8 57.4 L223.6 59.1 L219.8 62.1 L218.3 64.3 L218.1 67.7 L216.0 69.2 L215.2 68.0 L212.7 62.6 L212.0 58.3 L210.1 58.4 L208.2 56.0 L206.7 54.6 L202.6 54.8 L199.2 54.3 L198.4 53.1 L196.9 53.6 L194.2 52.4 L193.0 50.6 L191.3 50.8 L192.9 53.6 L194.2 55.3 L198.2 55.0 L198.3 53.7 L201.2 57.0 L199.7 58.7 L197.6 61.0 L194.6 62.6 L188.8 65.2 L187.5 65.3 L186.8 62.7 L183.9 58.0 L182.5 55.6 L180.5 52.4 L180.0 52.4 L178.3 50.8 L180.8 56.5 L183.2 60.8 L184.6 62.6 L186.7 65.0 L187.3 66.1 L188.0 67.2 L193.9 66.0 L193.8 67.0 L193.4 68.2 L191.3 72.2 L190.0 73.6 L187.1 76.4 L185.4 77.7 L183.9 80.2 L184.0 82.8 L184.8 84.7 L185.0 88.7 L180.4 92.5 L180.8 95.8 L178.4 98.0 L178.3 100.1 L176.2 102.4 L174.1 104.0 L172.6 104.5 L169.9 104.7 L167.8 105.4 L166.4 104.7 L166.1 102.6 L163.8 98.8 L163.0 95.1 L160.9 90.8 L161.2 88.2 L162.4 86.1 L162.1 83.6 L161.2 81.1 L158.9 77.7 L159.2 74.1 L158.8 72.7 L158.1 71.9 L156.0 72.4 L154.6 70.7 L151.8 70.9 L149.3 72.0 L147.6 71.6 L144.7 72.3 L141.4 70.3 L139.9 68.5 L138.4 66.8 L137.1 65.7 L136.6 63.4 L137.3 59.9 L137.3 57.4 L138.6 55.3 L140.2 52.4 L142.9 50.7 L143.0 48.5 L145.2 47.2 L146.1 45.8 L149.3 46.4 L152.3 45.1 L158.0 44.8 L160.2 44.7 L159.6 47.1 L160.3 47.9 L163.8 48.7 L166.5 50.4 L167.8 49.9 L167.8 48.7 L170.3 48.5 L172.0 49.1 L175.3 49.9 L177.8 49.6 L179.8 49.7 L180.8 47.4 L181.0 45.4 L178.3 45.5 L176.2 45.4 L174.1 45.0 L173.1 43.5 L173.0 42.2 L175.3 41.3 L177.2 41.3 L180.4 40.5 L183.1 41.5 L185.8 41.0 L184.1 38.8 L182.0 37.7 L183.0 36.6 L180.4 37.5 L179.1 38.4 L178.3 37.7 L176.8 36.7 L175.8 37.7 L175.1 38.8 L174.3 40.5 L172.9 41.5 L170.6 42.5 L170.1 44.5 L168.9 44.2 L167.9 42.6 L167.3 40.6 L164.8 39.3 L162.3 37.7 L161.3 38.3 L162.4 39.3 L164.4 41.0 L166.5 42.1 L164.8 43.2 L164.1 43.9 L161.3 41.0 L159.4 38.8 L158.5 38.5 L156.5 39.6 L153.8 39.5 L153.6 40.6 L151.7 41.4 L151.0 42.6 L150.4 44.2 L149.2 45.0 L147.3 45.0 L145.5 44.8 L143.5 44.8Z M146.2 33.8 L152.1 32.8 L152.4 31.5 L151.2 30.9 L150.0 29.9 L149.3 28.8 L149.5 27.4 L148.5 26.5 L146.8 26.5 L145.8 28.0 L146.4 29.3 L148.5 30.0 L147.0 31.4 L147.2 32.4 L148.5 32.6Z M142.6 32.3 L146.0 31.9 L146.0 30.4 L144.7 29.4 L142.6 30.2Z M130.9 20.7 L135.5 22.4 L139.3 21.5 L138.8 20.3 L134.2 19.8 L132.1 19.9Z M160.2 9.7 L165.3 8.4 L173.6 8.4 L167.8 10.6 L163.6 11.0Z M198.8 16.5 L202.2 11.8 L208.0 11.1 L197.6 14.4Z M260.1 49.6 L261.3 47.5 L264.2 47.0 L265.9 46.8 L268.4 46.3 L269.3 43.5 L269.7 41.1 L268.4 41.4 L268.3 43.5 L265.7 44.8 L262.6 46.0 L260.8 47.0Z M268.4 41.0 L271.4 40.4 L273.1 39.4 L269.7 37.7Z M270.1 37.2 L271.4 34.6 L271.0 30.4 L270.1 30.8Z M217.9 67.7 L219.6 69.7 L218.6 71.0 L217.9 70.1Z M252.1 57.0 L253.3 54.9 L252.5 56.6Z M251.7 60.4 L253.6 60.4 L253.8 64.2 L255.0 65.4 L256.7 68.4 L256.7 70.5 L253.3 70.1 L254.6 67.6 L252.5 65.0 L252.1 62.9Z M230.9 71.3 L233.2 72.6 L235.7 74.7 L238.2 76.8 L239.9 79.0 L239.9 81.1 L237.0 79.8 L234.9 77.7 L232.8 74.7Z M239.5 81.7 L241.6 81.5 L245.4 81.7 L247.1 82.6 L243.3 82.9 L239.9 82.3Z M242.4 74.5 L244.1 73.9 L246.6 72.2 L249.1 70.1 L250.8 71.8 L250.0 75.2 L248.7 77.7 L248.3 79.4 L245.8 78.8 L243.4 78.5 L242.8 76.4Z M250.8 76.0 L252.1 75.2 L255.9 74.7 L252.5 75.6 L252.9 76.8 L254.2 79.8 L252.5 79.0 L252.1 80.6 L251.2 80.2 L251.7 77.7Z M260.9 76.8 L263.4 76.8 L266.8 77.3 L269.3 78.2 L272.6 79.4 L274.7 81.1 L277.3 84.9 L274.3 84.4 L271.8 82.4 L269.3 83.8 L266.8 82.9 L266.4 80.4 L262.6 79.4 L261.7 78.4Z M246.2 94.6 L246.8 98.4 L247.5 104.7 L250.0 105.6 L254.2 104.5 L256.7 103.3 L260.9 102.6 L263.4 103.4 L264.9 105.4 L266.3 103.9 L267.2 105.6 L268.4 107.7 L271.4 108.8 L273.9 108.9 L276.8 107.7 L277.9 104.3 L279.8 99.6 L279.4 97.1 L277.3 95.0 L276.0 93.3 L273.7 91.9 L272.9 88.7 L271.4 87.8 L270.5 85.1 L269.7 87.0 L269.7 89.9 L268.4 90.9 L265.5 89.1 L265.8 86.4 L262.2 85.7 L260.1 87.0 L259.6 88.7 L257.5 87.8 L255.9 88.5 L253.6 90.4 L252.5 92.5 L249.1 93.4Z M272.5 110.4 L275.3 110.5 L275.0 112.5 L273.5 112.7Z M295.9 105.1 L297.4 106.4 L298.6 107.7 L300.6 107.9 L299.5 109.4 L297.8 111.0 L297.4 108.9 L296.5 107.2Z M295.8 110.2 L297.1 111.0 L296.1 112.7 L294.4 114.7 L292.8 115.4 L290.7 114.8 L291.9 113.2 L294.4 111.9Z M187.9 97.1 L190.4 97.1 L192.5 90.4 L193.3 89.0 L192.3 86.1 L190.4 89.1 L188.3 89.8 L187.5 92.9 L187.7 95.4Z M79.7 57.5 L83.5 56.5 L86.4 57.8 L88.8 58.9 L85.7 59.2 L83.1 57.5Z M88.5 60.5 L90.6 59.2 L93.7 60.3 L91.0 61.0Z M0.0 18.2 L3.4 19.0 L5.9 20.0 L3.4 20.4 L0.0 19.8Z M0.0 152.0 L302.0 152.0 L302.0 147.4 L293.6 141.9 L289.4 140.6 L287.7 136.0 L276.8 133.9 L264.2 131.7 L247.5 132.2 L234.9 131.3 L224.8 132.2 L213.9 134.7 L201.3 132.6 L188.8 133.0 L176.2 134.7 L163.6 135.1 L151.0 136.4 L138.4 136.8 L130.0 139.8 L113.2 141.9 L100.7 138.5 L97.3 135.1 L100.7 133.0 L95.6 133.8 L92.3 136.0 L87.2 137.6 L71.3 137.2 L58.7 138.5 L46.1 138.1 L33.6 139.8 L25.2 141.0 L16.8 142.3 L0.0 147.4Z" fill="#eca69e" stroke="#a0554c" stroke-width="0.8" stroke-linejoin="round"/>
<path d="M47.8 34.6 L71.3 34.6 L76.3 35.5 L81.4 37.2 L84.7 39.7 L88.1 38.0 L91.4 38.0 L94.0 35.9 L94.8 38.0 M32.7 25.3 L32.7 17.1 M52.8 48.6 L57.9 49.6 L61.7 49.1 L64.6 51.5 L69.2 54.2 M149.5 39.4 L153.5 40.1 M145.1 40.5 L144.7 44.3 M153.1 32.9 L156.0 34.2 L157.7 35.5 L157.3 35.9 L156.5 37.2 L156.9 38.8 M162.7 30.4 L163.4 32.9 L161.5 33.8 L161.9 35.0 L159.4 35.9 L157.3 35.9 M170.7 30.4 L169.9 34.2 L166.8 34.2 L165.3 35.5 L164.8 36.7 L162.5 37.6 M174.1 27.4 L177.4 32.1 L179.1 31.9 L184.6 34.2 L182.9 36.3 M168.6 28.7 L172.4 30.0 L174.5 28.7 L174.1 27.4 L174.5 25.8 M174.9 17.7 L176.2 24.5 L174.1 24.7 M167.8 17.7 L170.7 20.3 L171.1 20.5 M161.1 26.2 L161.5 24.5 L161.1 22.8 L163.6 20.3 L167.8 17.7 L174.9 17.7 M169.5 35.0 L173.6 35.5 L175.7 37.6 M169.5 38.4 L172.0 39.1 L174.5 39.0 M166.9 37.2 L168.6 38.0 L169.9 38.4 M191.3 40.5 L190.4 38.0 L192.9 35.5 L201.3 32.9 L209.7 30.0 L218.1 32.9 L224.4 34.6 L232.4 33.4 L241.6 34.2 L249.1 34.2 L251.7 32.1 L257.5 33.8 L263.4 35.0 L260.9 39.7 L260.6 40.3 M194.6 40.5 L197.1 41.4 L201.3 40.1 L205.5 39.3 L209.7 41.4 L213.9 41.8 L218.1 40.1 L224.4 34.6 M187.9 44.8 L189.6 43.1 L191.7 43.5 L191.3 40.5 M203.0 44.8 L206.4 44.3 L211.0 44.8 L213.9 44.8 M202.2 49.8 L203.0 46.4 L206.4 44.3 M210.6 47.3 L213.9 46.0 L216.4 46.4 M224.0 53.2 L228.2 52.8 L232.4 52.4 L233.2 55.7 L235.7 57.8 L239.1 56.6 L241.6 57.8 M208.0 55.7 L210.6 52.4 L213.9 49.0 L216.4 46.4 M218.1 50.7 L221.5 51.9 L224.8 53.2 M232.4 52.4 L234.9 59.5 L238.2 61.2 L239.9 65.0 L237.4 66.7 M233.6 65.0 L236.6 63.8 L238.2 64.2 M235.7 58.3 L237.4 60.4 M226.5 33.8 L233.2 40.1 L239.1 41.0 L245.0 39.7 L249.1 37.2 L251.7 36.3 M180.8 48.1 L186.2 44.8 L187.9 44.8 M183.7 49.0 L189.6 51.5 L191.3 50.7 M181.2 51.1 L186.2 49.0 L192.9 55.7 M187.1 62.1 L190.4 61.6 L194.6 60.0 L197.6 57.0 M180.4 49.0 L181.2 51.1 M191.3 50.7 L189.6 48.1 L189.2 46.0 L187.9 44.8 M143.7 52.8 L147.2 55.3 L151.8 58.3 L154.4 60.0 L161.1 56.2 L162.7 57.0 L164.4 56.2 L171.1 59.1 L171.1 57.4 L172.0 57.4 M172.0 49.4 L172.0 57.4 L177.0 57.4 L182.0 57.4 M159.0 50.7 L159.4 54.9 L161.1 56.2 M143.7 52.8 L140.1 52.6 M136.7 58.0 L140.1 58.0 L140.9 63.8 L145.1 63.3 L146.8 62.5 L146.4 55.1 M151.8 58.3 L154.4 62.5 L150.2 63.3 L148.5 65.0 L146.8 66.7 L144.3 67.1 L141.8 65.4 M154.4 62.5 L154.4 65.0 L161.1 65.0 L162.7 65.4 M162.7 57.0 L164.4 59.1 L164.0 62.5 L162.3 64.6 L163.6 67.6 L162.7 70.1 L162.7 72.2 L164.4 74.3 L166.1 73.0 M171.1 59.1 L170.7 62.9 L169.9 65.0 L169.5 67.6 L173.6 68.4 L176.2 67.6 L179.5 68.0 M182.0 57.4 L182.0 60.8 L182.0 63.8 L179.1 65.4 L179.5 68.0 L180.4 71.8 L185.4 72.6 L186.2 74.3 L186.7 76.8 M179.5 68.0 L179.1 72.6 L176.2 72.6 L175.3 74.3 L176.2 76.8 L175.7 79.8 L176.6 83.2 M166.1 73.0 L169.9 71.9 L174.1 71.8 L177.0 73.0 M161.1 74.1 L164.4 74.3 L165.7 76.8 L165.3 80.2 L161.9 80.2 M159.2 74.1 L160.2 74.1 L161.1 74.1 M176.6 83.2 L175.3 86.1 L169.5 87.0 L169.5 85.3 L164.8 82.8 L161.9 80.2 M161.1 90.6 L167.8 91.2 L171.1 90.8 L173.6 90.4 L175.7 89.1 L178.7 87.8 L180.4 85.7 L184.8 84.9 M167.8 91.2 L167.8 94.6 L167.8 96.7 L167.8 99.9 L165.3 100.1 M171.1 90.8 L174.9 94.6 L177.8 95.0 L177.8 98.4 M153.5 70.1 L153.3 66.3 M148.5 71.8 L148.7 66.7 M144.3 72.2 L144.3 69.2 L141.8 67.6 M186.2 66.7 L187.1 68.4 L191.3 69.2 L191.3 72.2 M175.7 79.8 L179.5 76.8 L182.0 79.0 L184.1 79.8 M179.1 72.6 L180.4 71.8 L182.9 73.0 L185.4 72.6 M100.7 71.8 L98.2 73.5 L96.5 75.3 L92.7 74.7 L92.3 79.4 L89.3 80.2 L89.8 84.4 L92.7 85.3 L95.6 84.4 L99.0 87.4 L100.7 89.5 L102.3 92.9 L104.9 94.6 L105.7 98.0 L102.8 101.3 L106.1 104.3 M92.7 85.3 L93.1 89.5 L94.0 94.6 L98.6 94.6 L102.3 92.9 M94.0 94.6 L94.8 96.3 L93.5 99.2 L92.3 103.9 L91.4 109.8 L91.0 114.0 L90.6 118.2 M98.6 94.6 L102.8 97.1 L105.7 98.0 M83.9 79.0 L87.7 76.8 L90.6 75.6 L94.8 74.7 L94.4 70.9 L90.6 70.1 L90.2 66.7 M103.2 70.9 L102.3 74.3 M105.7 71.4 L105.3 74.3 M0.0 32.5 L3.4 32.1 L8.4 31.4 L12.6 30.2 L16.8 29.1 M0.0 25.3 L1.7 23.2 L4.2 22.0 M251.7 52.4 L250.0 50.7 M73.8 60.8 L76.3 60.8 L76.3 64.2 M78.9 66.7 L81.0 66.7" fill="none" stroke="#a85c54" stroke-width="0.55"/>
<path d="M190.4 38.0 L192.5 36.6 L195.5 38.0 L194.2 40.5 L196.3 42.2 L195.9 44.6 L193.4 44.8 L192.4 42.2 L190.8 40.1Z M174.5 41.2 L176.2 37.6 L179.1 38.4 L181.6 37.7 L182.9 36.3 L184.1 38.8 L185.8 40.9 L181.2 41.1 L177.0 41.2Z M200.1 37.2 L202.6 36.7 L202.2 38.8 L200.1 38.8Z M71.3 26.2 L77.2 27.9 L81.8 31.2 L84.3 32.1 L85.6 26.6 L85.6 23.4 L78.9 22.4 L73.0 24.1Z" fill="#ffbcbc" stroke="#a0554c" stroke-width="0.6"/>
<rect x="0.5" y="1.5" width="300.5" height="149" fill="none" stroke="#ffc2c2" stroke-width="3.4" rx="2"/>
<rect x="0.5" y="1.5" width="300.5" height="149" fill="none" stroke="#ff8585" stroke-width="1.9"/>
<path d="M151.0 69.5V82.5M144.5 76.0H157.5" stroke="#b657e0" stroke-width="3"/>
</svg>
<div class="btn" style="left:513px;top:841px;width:80px;border-color:#3f93e6;background:linear-gradient(#f2f7fc,#e4eef9);"></div>
<div class="t" style="left:545.92px;top:846.88px;font-size:9.59px">OK</div>
<div class="btn" style="left:599px;top:841px;width:80px;"></div>
<div class="t" style="left:622.25px;top:846.74px;font-size:9.76px">Annuler</div>
<div class="btn" style="left:685px;top:841px;width:80px;"></div>
<div class="t" style="left:704.15px;top:846.62px;font-size:9.9px">Appliquer</div>
<div class="btn" style="left:771px;top:841px;width:80px;"></div>
<div class="t" style="left:801.55px;top:846.86px;font-size:9.62px">Aide</div>
<div class="a" style="left:0;top:864px;width:215px;height:3px;background:#1c1c1c"></div>
<div class="a" style="left:215px;top:864px;width:239px;height:3px;background:#9c9c9c"></div>
<div class="a" style="left:454px;top:864px;width:187px;height:3px;background:#303030"></div>
<div class="a" style="left:641px;top:864px;width:207px;height:3px;background:#8a8a8a"></div>
</body></html>
